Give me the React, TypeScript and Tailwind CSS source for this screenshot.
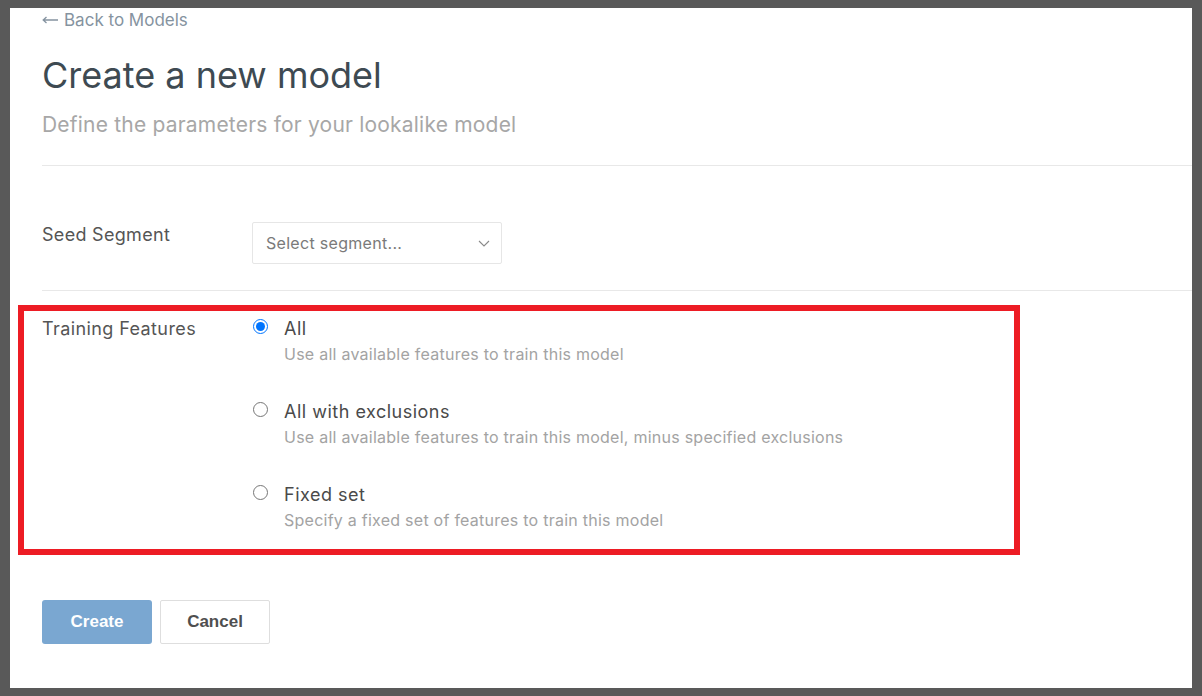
const options = [
  { id: "all", label: "All", desc: "Use all available features to train this model", checked: true },
  {
    id: "exclusions",
    label: "All with exclusions",
    desc: "Use all available features to train this model, minus specified exclusions",
    checked: false,
  },
  { id: "fixed", label: "Fixed set", desc: "Specify a fixed set of features to train this model", checked: false },
];

export default function App() {
  return (
    <div className="h-[696px] w-[1202px] bg-[#595959] pt-[8px] pb-[8px] px-[10px]">
      <div className="relative h-full bg-white pl-[32px] font-['Inter',sans-serif] overflow-hidden">
        <a className="flex items-center gap-[6px] text-[17px] leading-[24px] text-[#8593a0]">
          <svg width="16" height="8" viewBox="0 0 16 8" fill="none" stroke="currentColor" strokeWidth="1.3">
            <path d="M16 4H1.5M4.5 1L1.2 4l3.3 3" />
          </svg>
          <span>Back to Models</span>
        </a>

        <h1 className="mt-[21px] text-[36px] leading-[44px] text-[#3e4a52]">Create a new model</h1>
        <p className="mt-[13px] text-[21px] leading-[30px] tracking-[0.2px] text-[#a7a7a7]">
          Define the parameters for your lookalike model
        </p>

        <div className="mt-[25px] border-t border-[#e8e8e8]" />

        <div className="flex pt-[56px] pb-[26px]">
          <label className="w-[210px] mt-[1px] text-[18px] leading-[24px] tracking-[0.3px] text-[#555]">Seed Segment</label>
          <button className="flex h-[42px] w-[250px] items-center justify-between rounded-[2px] border border-[#e6e6e6] pl-[13px] pr-[11px] text-[16px] tracking-[0.3px] text-[#7a7a7a]">
            <span>Select segment...</span>
            <svg width="12" height="7" viewBox="0 0 12 7" fill="none" stroke="#8a8a8a" strokeWidth="1.1">
              <path d="M1 1l5 5 5-5" />
            </svg>
          </button>
        </div>

        <div className="border-t border-[#e8e8e8]" />

        <div className="flex pt-[25px]">
          <label className="w-[210px] text-[18px] leading-[26px] tracking-[0.4px] text-[#555]">Training Features</label>
          <div className="flex flex-col gap-[33px]">
            {options.map((o) => (
              <div key={o.id} className="flex">
                <input
                  type="radio"
                  name="features"
                  defaultChecked={o.checked}
                  className="mt-[3px] ml-[1px] h-[15px] w-[15px] m-0"
                />
                <div className="ml-[16px]">
                  <div className="text-[18px] leading-[26px] tracking-[0.5px] text-[#4a4a4a]">{o.label}</div>
                  <div className="text-[16px] leading-[24px] tracking-[0.25px] text-[#a3a3a3]">{o.desc}</div>
                </div>
              </div>
            ))}
          </div>
        </div>

        <div className="mt-[68px] flex gap-[8px] font-['Liberation_Sans',Arial,sans-serif] font-bold text-[17px]">
          <button className="h-[44px] w-[110px] rounded-[3px] bg-[#7aa7d1] text-white">Create</button>
          <button className="h-[44px] w-[110px] rounded-[2px] border border-[#dedede] text-[#4f4f4f]">Cancel</button>
        </div>

        <div className="pointer-events-none absolute left-[8px] top-[297px] h-[250px] w-[1002px] border-[6px] border-[#ed1c24]" />
      </div>
    </div>
  );
}
